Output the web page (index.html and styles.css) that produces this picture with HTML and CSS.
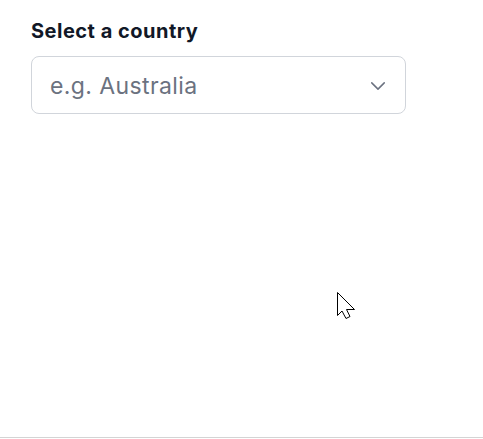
FILE: index.html
```html
<!DOCTYPE html>
<html lang="en">
<head>
<meta charset="utf-8">
<title>Select a country</title>
<link rel="stylesheet" href="styles.css">
</head>
<body>
<main class="page">
  <div class="field">
    <label class="label" for="country">Select a country</label>
    <div class="select" id="country">
      <span class="placeholder">e.g. Australia</span>
      <svg class="chevron" viewBox="0 0 24 24" width="20" height="20" fill="none" stroke="currentColor" stroke-width="1.8" stroke-linecap="round" stroke-linejoin="round"><path d="M19.5 8.25l-7.5 7.5-7.5-7.5"/></svg>
    </div>
  </div>
</main>
<div class="divider"></div>
<svg class="cursor" width="20" height="28" viewBox="0 0 20 28"><path d="M0.5 0.5 L0.5 23.5 L5 19 L9 26.5 L13 24.5 L9.5 17.5 L17.5 17.5 Z" fill="#fff" stroke="#000" stroke-width="1" stroke-linejoin="miter"/></svg>
</body>
</html>
```
FILE: styles.css
```css
html, body {
  margin: 0;
  padding: 0;
  background: #ffffff;
}
body {
  font-family: Inter, "Noto Sans", sans-serif;
  height: 439px;
  overflow: hidden;
  position: relative;
}
.page {
  height: 437px;
  box-sizing: border-box;
  padding: 17px 31px 0 31px;
}
.field {
  display: flex;
  flex-direction: column;
  width: 375px;
}
.label {
  font-size: 20px;
  line-height: 28px;
  font-weight: 700;
  letter-spacing: 0.5px;
  color: #111827;
  margin-bottom: 11px;
}
.select {
  box-sizing: border-box;
  height: 58px;
  border: 1px solid #d1d5db;
  border-radius: 8px;
  display: flex;
  align-items: center;
  justify-content: space-between;
  padding: 0 17px 0 18px;
}
.placeholder {
  font-size: 23px;
  line-height: 30px;
  letter-spacing: 0.4px;
  color: #6b7280;
  padding-top: 2px;
}
.chevron {
  color: #6b7280;
  display: block;
  margin-top: 2px;
}
.divider {
  height: 1px;
  background: #d4d4d4;
}
.cursor {
  position: absolute;
  left: 337px;
  top: 292px;
}
```
